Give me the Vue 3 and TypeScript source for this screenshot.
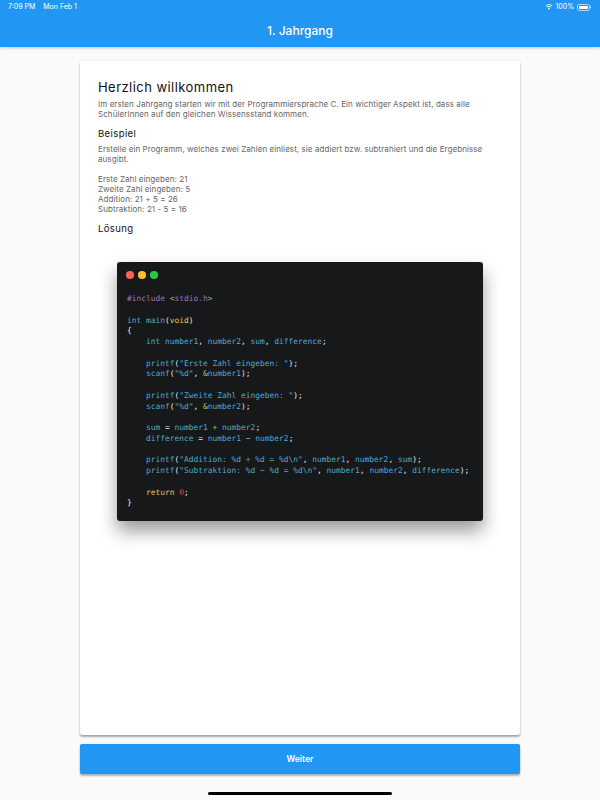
<script setup lang="ts">
type Tok = [string, string?];
const code: Tok[][] = [
  [["#include", "p"], [" "], ["<", "g"], ["stdio.h", "p"], [">", "g"]],
  [],
  [["int", "b"], [" "], ["main", "b"], ["(", "w"], ["void", "y"], [")", "w"]],
  [["{", "w"]],
  [["    "], ["int number1", "b"], [", ", "w"], ["number2", "b"], [", ", "w"], ["sum", "b"], [", ", "w"], ["difference", "b"], [";", "w"]],
  [],
  [["    "], ["printf", "b"], ["(", "w"], ['"Erste Zahl eingeben: "', "b"], [");", "w"]],
  [["    "], ["scanf", "b"], ["(", "w"], ['"%d"', "b"], [", ", "w"], ["&", "g"], ["number1", "b"], [");", "w"]],
  [],
  [["    "], ["printf", "b"], ["(", "w"], ['"Zweite Zahl eingeben: "', "b"], [");", "w"]],
  [["    "], ["scanf", "b"], ["(", "w"], ['"%d"', "b"], [", ", "w"], ["&", "g"], ["number2", "b"], [");", "w"]],
  [],
  [["    "], ["sum", "b"], [" = ", "w"], ["number1", "b"], [" "], ["+", "g"], [" "], ["number2", "b"], [";", "w"]],
  [["    "], ["difference", "b"], [" = ", "w"], ["number1", "b"], [" "], ["−", "g"], [" "], ["number2", "b"], [";", "w"]],
  [],
  [["    "], ["printf", "b"], ["(", "w"], ['"Addition: %d + %d = %d\\n"', "b"], [", ", "w"], ["number1", "b"], [", ", "w"], ["number2", "b"], [", ", "w"], ["sum", "b"], [");", "w"]],
  [["    "], ["printf", "b"], ["(", "w"], ['"Subtraktion: %d − %d = %d\\n"', "b"], [", ", "w"], ["number1", "b"], [", ", "w"], ["number2", "b"], [", ", "w"], ["difference", "b"], [");", "w"]],
  [],
  [["    "], ["return", "y"], [" "], ["0", "r"], [";", "w"]],
  [["}", "w"]],
];
</script>

<template>
  <div class="screen">
    <header class="appbar">
      <div class="status">
        <div class="status-left">
          <span>7:09 PM</span>
          <span>Mon Feb 1</span>
        </div>
        <div class="status-right">
          <svg class="wifi" width="8" height="6" viewBox="0 0 18 14" aria-hidden="true">
            <path fill="#fff" d="M9 2.6c2.6 0 5 1 6.8 2.7l1.3-1.4A11.8 11.8 0 0 0 9 .7 11.800 11.800 0 0 0 .9 3.900l1.300 1.400A9.900 9.900 0 0 1 9 2.600zM9 6.800c1.400 0 2.800.5 3.800 1.500l1.400-1.400A7.500 7.500 0 0 0 9 4.800c-2 0-3.800.8-5.200 2.100l1.400 1.400c1-1 2.400-1.500 3.800-1.500zM9 13.300l2.600-2.800A3.600 3.600 0 0 0 9 9.400c-1 0-1.900.4-2.600 1.100z" />
          </svg>
          <span class="pct">100%</span>
          <span class="battery"><span class="battery-fill"></span></span>
          <span class="nub"></span>
        </div>
      </div>
      <h1 class="title">1. Jahrgang</h1>
    </header>

    <main class="body">
      <article class="card">
        <h2 class="h-main">Herzlich willkommen</h2>
        <p class="text">Im ersten Jahrgang starten wir mit der Programmiersprache C. Ein wichtiger Aspekt ist, dass alle SchülerInnen auf den gleichen Wissensstand kommen.</p>
        <h3 class="h-sub">Beispiel</h3>
        <p class="text">Erstelle ein Programm, welches zwei Zahlen einliest, sie addiert bzw. subtrahiert und die Ergebnisse ausgibt.</p>
        <p class="text sample">
          Erste Zahl eingeben: 21<br />
          Zweite Zahl eingeben: 5<br />
          Addition: 21 + 5 = 26<br />
          Subtraktion: 21 - 5 = 16
        </p>
        <h3 class="h-sub solution">Lösung</h3>
        <div class="window">
          <div class="dots">
            <span class="dot red"></span>
            <span class="dot yellow"></span>
            <span class="dot green"></span>
          </div>
          <div class="code">
            <div v-for="(line, i) in code" :key="i" class="line"><span v-for="(t, j) in line" :key="j" :class="t[1]">{{ t[0] }}</span></div>
          </div>
        </div>
      </article>
      <button class="next" type="button">Weiter</button>
    </main>
    <div class="home"></div>
  </div>
</template>

<style>
html, body { margin: 0; background: #fafafa; }
</style>

<style scoped>
.screen {
  width: 600px;
  height: 800px;
  overflow: hidden;
  display: flex;
  flex-direction: column;
  background: #fafafa;
  font-family: Inter, "Liberation Sans", sans-serif;
}
.appbar {
  height: 47px;
  flex: none;
  background: #2196f3;
  color: #fff;
  box-shadow: 0 1px 3px rgba(0, 0, 0, 0.22);
  position: relative;
  z-index: 2;
}
.status {
  height: 14px;
  padding: 0 9.500px 0 8px;
  display: flex;
  justify-content: space-between;
  align-items: center;
  font-size: 7px;
  line-height: 14px;
}
.status-left { display: flex; gap: 8px; }
.status-right { display: flex; align-items: center; }
.wifi { display: block; margin-right: 3px; }
.pct { width: 20px; }
.battery {
  width: 13.500px;
  height: 7px;
  margin-left: 1px;
  padding: 1px;
  box-sizing: border-box;
  border: 0.500px solid rgba(255, 255, 255, 0.6);
  border-radius: 2px;
  display: flex;
}
.battery-fill { flex: 1; background: #fff; border-radius: 1px; }
.nub {
  width: 0.500px;
  height: 2.500px;
  background: rgba(255, 255, 255, 0.6);
}
.title {
  margin: 9px 0 0;
  font-size: 12px;
  line-height: 15px;
  font-weight: 500;
  text-align: center;
}
.body {
  flex: 1;
  min-height: 0;
  padding: 14px 80px 0;
  display: flex;
  flex-direction: column;
  gap: 9px;
}
.card {
  height: 674px;
  box-sizing: border-box;
  padding: 18px 18px 0 18px;
  background: #fff;
  border-radius: 2px;
  box-shadow: 0 2px 2px rgba(0, 0, 0, 0.32), 0 0 2px rgba(0, 0, 0, 0.12);
  color: #111;
}
.h-main {
  margin: 0;
  font-size: 13px;
  line-height: 16px;
  font-weight: 400;
  letter-spacing: 0.450px;
}
.text {
  margin: 4px 0 0;
  font-size: 8px;
  line-height: 10px;
  color: #666;
  letter-spacing: 0.075px;
}
.sample { margin-top: 10px; }
.h-sub {
  margin: 9px 0 0;
  font-size: 9.500px;
  line-height: 12px;
  font-weight: 400;
  letter-spacing: 0.400px;
}
.solution { margin-top: 9px; }
.window {
  width: 366px;
  height: 259px;
  box-sizing: border-box;
  margin: 27px 0 0 19px;
  padding: 9px 9px 0;
  background: #17181a;
  border-radius: 3px;
  box-shadow: 0 10px 18px rgba(0, 0, 0, 0.4);
}
.dots { display: flex; gap: 4.500px; height: 7.500px; }
.dot { width: 7.500px; height: 7.500px; border-radius: 50%; }
.red { background: #ff5f56; }
.yellow { background: #ffbd2e; }
.green { background: #27c93f; }
.code {
  margin-top: 15.500px;
  padding-left: 1px;
  font-family: "DejaVu Sans Mono", "Liberation Mono", monospace;
  font-size: 7.900px;
  line-height: 10.750px;
  color: #e6e6e6;
}
.line { height: 10.750px; white-space: pre; }
.p { color: #9a76b8; }
.g { color: #9ccc65; }
.b { color: #4fa8d2; }
.y { color: #e8c06a; }
.w { color: #e6e6e6; }
.r { color: #d9534f; }
.next {
  height: 30px;
  flex: none;
  border: 0;
  padding: 0;
  border-radius: 2px;
  background: #2196f3;
  color: #fff;
  font-family: inherit;
  font-size: 8.500px;
  font-weight: 600;
  box-shadow: 0 2px 2px rgba(0, 0, 0, 0.28), 0 0 2px rgba(0, 0, 0, 0.12);
}
.home {
  position: absolute;
  left: 208px;
  top: 792px;
  width: 184px;
  height: 3px;
  border-radius: 2px;
  background: #000;
}
</style>
